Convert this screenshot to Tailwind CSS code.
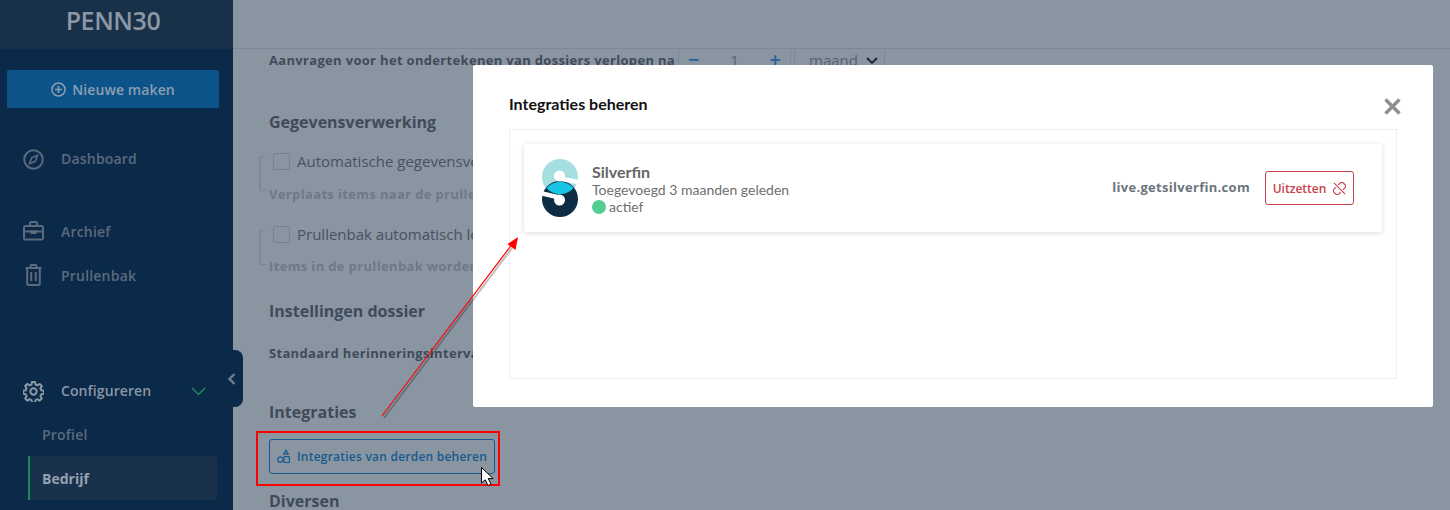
<!DOCTYPE html>
<html lang="nl">
<head>
  <meta charset="UTF-8" />
  <title>Penneo - Bedrijf</title>
  <script src="https://cdn.jsdelivr.net/npm/@tailwindcss/browser@4"></script>
</head>
<body class="bg-[#8a95a2]">
<div class="relative flex w-[1450px] h-[510px] overflow-hidden font-['Open_Sans',sans-serif]">

  <!-- sidebar -->
  <aside class="w-[233px] shrink-0 bg-[#0b2949]">
    <div class="h-[49px] bg-[#183149] flex items-center justify-center pr-[7px] pb-[9px]">
      <span class="text-[25px] leading-none font-semibold tracking-[-0.4px] text-[#8b97a4]">PENN30</span>
    </div>
    <button class="mt-[21px] ml-[7px] w-[212px] h-[38px] rounded-[2px] bg-[#0c5389] flex items-center justify-center gap-[6px] text-[14px] font-semibold tracking-[0.1px] text-[#8c9eb0]">
      <svg class="w-[15px] h-[15px]" viewBox="0 0 16 16" fill="none" stroke="currentColor" stroke-width="1.6"><circle cx="8" cy="8" r="7"/><path d="M8 4.2v7.6M4.2 8h7.6"/></svg>
      Nieuwe maken
    </button>
    <a class="mt-[29px] h-[44px] pl-[23px] flex items-center gap-[17px] text-[14px] font-semibold tracking-[0.2px] text-[#5b6b7d]">
      <svg class="w-[21px] h-[21px] mt-[1px]" viewBox="0 0 21 21" fill="none" stroke="currentColor" stroke-width="2"><circle cx="10.500" cy="10.500" r="9.300"/><path d="M14.500 6.500l-2.200 5.800-5.800 2.200 2.200-5.800z" stroke-width="1.600"/></svg>
      <span class="mt-[-2px]">Dashboard</span>
    </a>
    <a class="mt-[28px] h-[44px] pl-[23px] flex items-center gap-[17px] text-[14px] font-semibold tracking-[0.2px] text-[#5b6b7d]">
      <svg class="w-[21px] h-[20px]" viewBox="0 0 21 20" fill="none" stroke="currentColor" stroke-width="2"><rect x="1" y="5" width="19" height="13.500" rx="1.500"/><path d="M7 5V2.200C7 1.500 7.500 1 8.200 1h4.600c.7 0 1.200.5 1.200 1.200V5M1 10.500h19M8.500 9v3h4V9"/></svg>
      Archief
    </a>
    <a class="h-[44px] pl-[25px] flex items-center gap-[19px] text-[14px] font-semibold tracking-[0.2px] text-[#5b6b7d]">
      <svg class="w-[17px] h-[22px]" viewBox="0 0 17 22" fill="none" stroke="currentColor" stroke-width="2"><path d="M.5 4h16M2.200 4v15.500c0 .9.6 1.500 1.500 1.500h9.600c.9 0 1.500-.6 1.500-1.500V4M5.500 4V2.200c0-.7.5-1.200 1.200-1.200h3.600c.7 0 1.200.5 1.200 1.200V4M6.200 8v9M10.800 8v9"/></svg>
      Prullenbak
    </a>
    <a class="mt-[72px] h-[44px] pl-[23px] pr-[27px] flex items-center text-[14px] font-semibold tracking-[0.1px] text-[#8a97a5]">
      <svg class="w-[21px] h-[21px] mr-[17px]" viewBox="0 0 24 24" fill="none" stroke="currentColor" stroke-width="2.300" stroke-linejoin="round"><path d="M10.300 1.500h3.400l.6 3 2.200 1 2.600-1.600 2.400 2.400-1.600 2.600 1 2.200 3 .6v3.400l-3 .6-1 2.200 1.600 2.600-2.400 2.400-2.600-1.600-2.200 1-.6 3h-3.400l-.6-3-2.200-1-2.600 1.600-2.400-2.400 1.600-2.600-1-2.200-3-.6v-3.400l3-.6 1-2.200-1.600-2.600 2.400-2.400 2.600 1.600 2.200-1z" transform="translate(0 -.5)"/><circle cx="12" cy="12" r="3.600"/></svg>
      <span class="mt-[-2px]">Configureren</span>
      <svg class="ml-auto w-[15px] h-[9px]" viewBox="0 0 15 9" fill="none" stroke="#1f8a5f" stroke-width="1.500"><path d="M1 1l6.500 6.500L14 1"/></svg>
    </a>
    <a class="h-[43px] pl-[42px] flex items-center text-[14px] font-semibold tracking-[0.2px] text-[#5b6b7d]">Profiel</a>
    <a class="ml-[28px] w-[189px] h-[44px] pl-[12px] flex items-center rounded-r-[2px] border-l-2 border-[#1f8a5f] bg-[#1a314d] text-[14px] font-bold text-[#95a2b0]">Bedrijf</a>
  </aside>

  <!-- main page, dimmed behind the modal -->
  <main class="flex-1 min-w-0">
    <div class="h-[49px] border-b border-[#7c8895]"></div>
    <div class="pl-[36px] text-[#3f4b5a]">
      <div class="flex items-start h-[36px]">
        <span class="w-[409px] whitespace-nowrap text-[13px] leading-[22px] font-bold tracking-[0.32px]">Aanvragen voor het ondertekenen van dossiers verlopen na</span>
        <div class="w-[113px] h-[36px] flex justify-between px-[9px] border-x border-[#7c8895] text-[20px] leading-[22px]">
          <span class="text-[#24619c] font-semibold">−</span><span class="text-[15px] text-[#58636f]">1</span><span class="text-[#24619c] font-semibold">+</span>
        </div>
        <div class="ml-[3px] w-[91px] h-[36px] flex items-start justify-between pl-[14px] pr-[6px] border-x border-[#7c8895] text-[15px] leading-[22px] text-[#58636f]">
          maand
          <svg class="mt-[8px] w-[12px] h-[7px]" viewBox="0 0 12 7" fill="none" stroke="#1c2733" stroke-width="1.800"><path d="M1 1l5 5 5-5"/></svg>
        </div>
      </div>
      <h2 class="mt-[25px] text-[16px] leading-[24px] font-bold">Gegevensverwerking</h2>

      <div class="relative mt-[15px]">
        <span class="absolute left-[-10px] top-[7px] w-[7px] h-[35px] border-l-2 border-y border-[#7d8894]"></span>
        <label class="flex items-center h-[24px] text-[15px] leading-[24px] text-[#47525f]">
          <span class="ml-[4px] mr-[7px] w-[17px] h-[17px] rounded-[2px] border border-[#77828e]"></span>
          Automatische gegevensverwerking
        </label>
        <p class="mt-[9px] h-[24px] text-[13px] leading-[24px] font-bold tracking-[0.35px] text-[#6d7986] whitespace-nowrap">Verplaats items naar de prullenbak</p>
      </div>
      <div class="relative mt-[16px]">
        <span class="absolute left-[-10px] top-[8px] w-[7px] h-[35px] border-l-2 border-y border-[#7d8894]"></span>
        <label class="flex items-center h-[24px] text-[15px] leading-[24px] text-[#47525f]">
          <span class="ml-[4px] mr-[7px] w-[17px] h-[17px] rounded-[2px] border border-[#77828e]"></span>
          Prullenbak automatisch legen
        </label>
        <p class="mt-[8px] h-[24px] text-[13px] leading-[24px] font-bold tracking-[0.35px] text-[#6d7986] whitespace-nowrap">Items in de prullenbak worden verwijderd</p>
      </div>

      <h2 class="mt-[21px] text-[16px] leading-[24px] font-bold">Instellingen dossier</h2>
      <p class="mt-[18px] text-[13px] leading-[24px] font-bold tracking-[0.32px] whitespace-nowrap">Standaard herinneringsinterval</p>
      <h2 class="mt-[35px] text-[16px] leading-[24px] font-bold">Integraties</h2>
      <button class="mt-[15px] w-[226px] h-[35px] rounded-[3px] border border-[#165a8e] flex items-center justify-center gap-[7px] text-[12px] font-semibold tracking-[0.23px] whitespace-nowrap text-[#165a8e]">
        <svg class="w-[13px] h-[15px] shrink-0" viewBox="0 0 13 15" fill="none" stroke="currentColor" stroke-width="1.200"><path d="M9 1l2.200 4.200H6.800z"/><circle cx="3.300" cy="10.600" r="2.700"/><rect x="7" y="7.700" width="5.400" height="5.800" rx=".6"/></svg>
        Integraties van derden beheren
      </button>
      <h2 class="mt-[15px] text-[16px] leading-[24px] font-bold">Diversen</h2>
    </div>
  </main>

  <!-- sidebar collapse tab -->
  <div class="absolute left-[233px] top-[350px] w-[10px] h-[57px] rounded-r-[8px] bg-[#0b2949] flex items-center justify-center">
    <svg class="w-[8px] h-[12px] ml-[-12px] shrink-0" viewBox="0 0 8 12" fill="none" stroke="#6f7e8f" stroke-width="2.400"><path d="M6.500 1L1.500 6l5 5"/></svg>
  </div>

  <!-- modal -->
  <div class="absolute left-[473px] top-[65px] w-[960px] h-[342px] rounded-[2px] bg-white px-[36px] pt-[28px]">
    <div class="flex items-center justify-between h-[22px]">
      <h3 class="text-[16px] font-bold text-[#111] font-['Lato',sans-serif]">Integraties beheren</h3>
      <svg class="mr-[-4px] mt-[4px] w-[17px] h-[17px]" viewBox="0 0 17 17" fill="none" stroke="#8f8f8f" stroke-width="3.400"><path d="M1.500 1.500l14 14M15.500 1.500l-14 14"/></svg>
    </div>
    <div class="mt-[14px] h-[250px] border border-[#efefef] p-[14px]">
      <div class="h-[88px] rounded-[2px] bg-white shadow-[0_1px_5px_rgba(0,0,0,0.15)] flex items-center pl-[18px] pr-[28px] font-['Lato',sans-serif]">
        <svg class="w-[36px] h-[58px] shrink-0" viewBox="0 0 36 58">
          <circle cx="18" cy="18" r="18" fill="#a6dfdf"/>
          <circle cx="18" cy="40" r="18" fill="#0c2d44"/>
          <circle cx="17.500" cy="17" r="5.500" fill="#fff"/>
          <circle cx="17.500" cy="41" r="5.500" fill="#fff"/>
          <path d="M17.500 19.500L36 23M17.500 38.500L0 34.500" stroke="#fff" stroke-width="4.500" fill="none"/>
          <path d="M4.400 29a18 18 0 0 1 27.200 0a18 18 0 0 1-27.200 0z" fill="#17c4e4"/>
        </svg>
        <div class="ml-[14px] mt-[3px] leading-[17px]">
          <div class="mt-[-1px] mb-[1px] text-[16px] font-bold text-[#666]">Silverfin</div>
          <div class="text-[14px] text-[#6f6f6f]">Toegevoegd 3 maanden geleden</div>
          <div class="flex items-center gap-[3px] text-[14px] text-[#6f6f6f]"><span class="w-[14px] h-[14px] rounded-full bg-[#55cc94]"></span>actief</div>
        </div>
        <span class="ml-auto mr-[15px] text-[13px] font-bold tracking-[0.3px] text-[#6c757d] font-['Open_Sans',sans-serif]">live.getsilverfin.com</span>
        <button class="w-[89px] h-[34px] rounded-[3px] border border-[#c8414b] flex items-center justify-center gap-[7px] text-[12px] font-semibold text-[#c8414b] font-['Open_Sans',sans-serif]">
          <span class="mt-[1px]">Uitzetten</span>
          <svg class="w-[13px] h-[13px]" viewBox="0 0 14 14" fill="none" stroke="currentColor" stroke-width="1.200"><path d="M5.500 3.200L7.600 1.200a2.600 2.600 0 0 1 3.700 0l1.500 1.500a2.600 2.600 0 0 1 0 3.700l-2 2M8.500 10.800l-2.100 2a2.600 2.600 0 0 1-3.700 0l-1.500-1.500a2.600 2.600 0 0 1 0-3.700l2-2M1 1l12 12"/></svg>
        </button>
      </div>
    </div>
  </div>

  <!-- annotation: red frame, arrow and mouse pointer -->
  <div class="absolute left-[256px] top-[431px] w-[244px] h-[55px] border-2 border-[#f00]"></div>
  <svg class="absolute left-0 top-0 w-[1450px] h-[510px] pointer-events-none" viewBox="0 0 1450 510" fill="none">
    <path d="M383 417L511 247" stroke="#000" stroke-opacity=".25" stroke-width="2" transform="translate(1 1)"/>
    <path d="M382 416L513 243" stroke="#f00" stroke-width="1.200"/>
    <path d="M518 237L515.500 250L507.500 244z" fill="#f00"/>
    <path d="M481.500 467.500v15.500l3.700-3.200 2.900 5.700 2.900-1.400-2.800-5.500h5z" fill="#fff" stroke="#000" stroke-width="1"/>
  </svg>
</div>
</body>
</html>
